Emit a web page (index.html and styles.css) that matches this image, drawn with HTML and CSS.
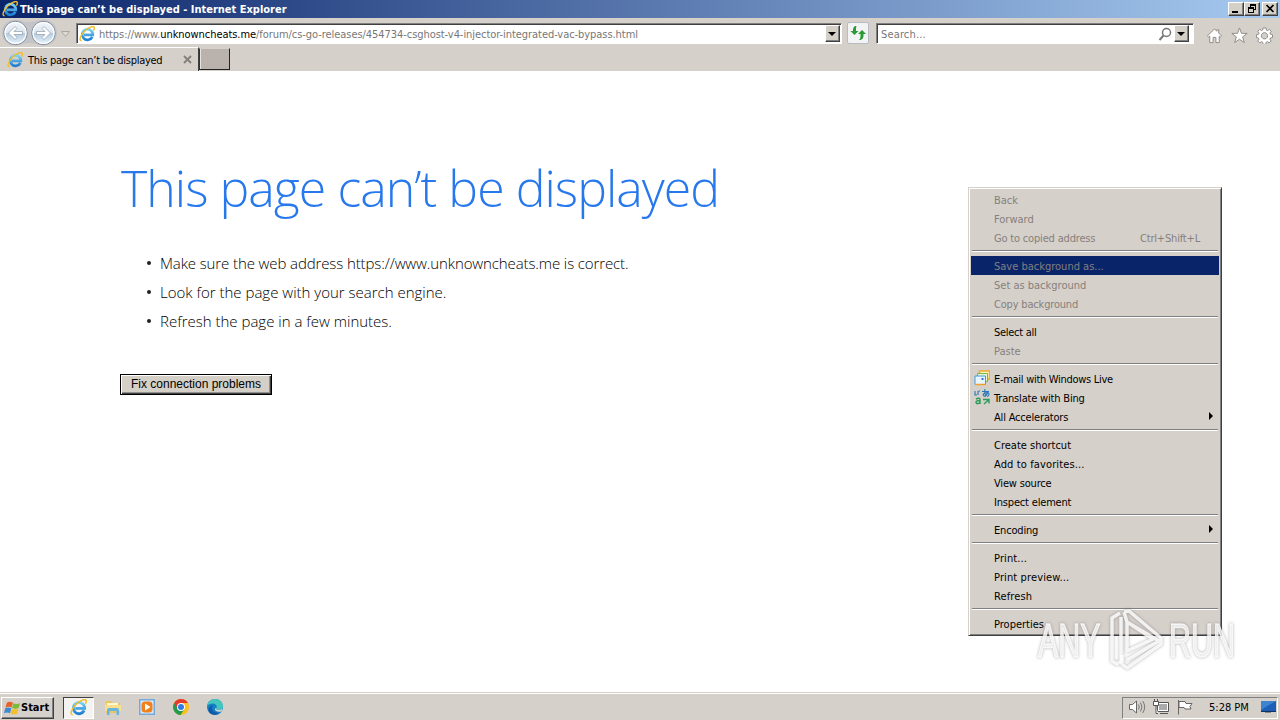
FILE: index.html
```html
<!DOCTYPE html>
<html lang="en">
<head>
<meta charset="utf-8">
<title>This page can’t be displayed - Internet Explorer</title>
<link rel="stylesheet" href="styles.css">
</head>
<body>
<svg class="defs" aria-hidden="true">
  <linearGradient id="blue" x1="0" y1="0" x2="0" y2="1"><stop offset="0" stop-color="#7cd3f7"/><stop offset="1" stop-color="#1d7fd0"/></linearGradient>
  <linearGradient id="orb" x1="0" y1="0" x2="0" y2="1"><stop offset="0" stop-color="#f4f7fb"/><stop offset=".48" stop-color="#dce5ef"/><stop offset=".52" stop-color="#b9cbdd"/><stop offset="1" stop-color="#e6f6ff"/></linearGradient>
  <symbol id="ie" viewBox="0 0 16 16">
    <path d="M13.3 10.8A5.3 5.3 0 1 1 13.8 8.8H5" fill="none" stroke="url(#blue)" stroke-width="2.7"/>
    <path d="M2.6 14.8C-.6 14.6 1.6 9 5.5 5.2 9.300 1.500 14.400-.7 15.200 1.300c.3.800 0 2-.7 3.300" fill="none" stroke="#f3bd25" stroke-width="1.400"/>
  </symbol>
</svg>
<div class="desktop">
  <header class="titlebar">
    <svg class="title-icon"><use href="#ie"/></svg>
    <span class="title-text">This page can’t be displayed - Internet Explorer</span>
    <div class="win-buttons">
      <span class="wb"><svg viewBox="0 0 14 12"><path d="M3 8h6v2H3z"/></svg></span>
      <span class="wb"><svg viewBox="0 0 14 12"><path d="M5 1h6v6H9V6h1V3H6v1H5zM3 4h6v6H3zM4 6v3h4V6z" fill-rule="evenodd"/></svg></span>
      <span class="wb last"><svg viewBox="0 0 14 12"><path d="M3.500 2l7 7M10.500 2l-7 7" stroke="#000" stroke-width="1.700"/></svg></span>
    </div>
  </header>

  <nav class="toolbar">
    <svg class="nav-orbs" viewBox="0 0 76 29">
      <path d="M2 15C2 0 18 1 22 3q7 2 14 0C46-1 57 3 57 15S44 29 36 26q-7-2-14 0C12 30 2 26 2 15z" fill="#c3c4c8"/>
      <g fill="url(#orb)" stroke="#7f8b9b"><circle cx="15.500" cy="15" r="11.700"/><circle cx="43.500" cy="15" r="11.700"/></g>
      <g fill="none" stroke="#fff" stroke-width="1.200"><circle cx="15.500" cy="15" r="10.500"/><circle cx="43.500" cy="15" r="10.500"/></g>
      <path d="M8.500 15l6.500-6.500 2 2-3 3h8.500v3H14l3 3-2 2zM50.500 15L44 8.500l-2 2 3 3h-8.500v3H45l-3 3 2 2z" fill="#fff" stroke="#8c9cac" stroke-width=".7"/>
      <path d="M61.500 13.500h8l-4 5z" fill="#dedbd7" stroke="#aaa6a0"/>
    </svg>
    <div class="field address">
      <svg class="field-icon"><use href="#ie"/></svg>
      <span class="url">https://www.<b>unknowncheats.me</b>/forum/cs-go-releases/454734-csghost-v4-injector-integrated-vac-bypass.html</span>
      <span class="drop"><svg viewBox="0 0 13 15"><path d="M2 6h8L6 10z"/></svg></span>
    </div>
    <div class="reload"><svg viewBox="0 0 20 20"><path d="M8.500 3H7Q5 4 5 6.500V8H2.500L6.500 12l4-4H8V5.500Q8 4 8.500 3z" fill="#2a9a35"/><path d="M11 17h1.500q3-1 3-4.500V11H18l-4-4-4 4h2.500v2.500q0 2-1.500 3.500z" fill="#2a9a35"/></svg></div>
    <div class="field search">
      <span class="hint">Search...</span>
      <svg class="lens" viewBox="0 0 14 14"><circle cx="8.500" cy="5.500" r="4" fill="none" stroke="#777" stroke-width="1.500"/><path d="M5.500 8.500L1.500 13" stroke="#777" stroke-width="2"/></svg>
      <span class="drop"><svg viewBox="0 0 13 15"><path d="M2 6h8L6 10z"/></svg></span>
    </div>
    <div class="tools">
      <svg viewBox="0 0 18 18"><path d="M1.500 9.500L9 2l2.500 2.500V3h2v3.500l3 3-1.200 1.200-1.300-1v6.800h-3.500V11h-3v5.500H4V9.700l-1.300 1z" /></svg>
      <svg viewBox="0 0 18 18"><path d="M9 1l2.100 5.700 6 .1-4.800 3.700 1.800 6L9 13l-5.100 3.500 1.800-6L.9 6.800l6-.1z"/></svg>
      <svg viewBox="0 0 18 18"><path d="M7.500 1h3l.4 2.200 1.300.6 1.900-1.300 2 2-1.300 1.900.6 1.300 2.100.5v3l-2.200.4-.6 1.300 1.300 1.900-2 2-1.900-1.300-1.300.6-.4 2.200h-3L7 16.100l-1.300-.6-1.900 1.300-2-2L3.100 13l-.6-1.300L.5 11.200v-3l2.100-.5.6-1.300-1.300-1.900 2-2 1.900 1.300L7 3.200zM9 6a3.300 3.300 0 1 0 .01 0z" fill-rule="evenodd"/></svg>
    </div>
  </nav>

  <div class="tabs">
    <div class="tab">
      <svg class="tab-icon"><use href="#ie"/></svg>
      <span class="tab-text">This page can’t be displayed</span>
      <svg class="tab-x" viewBox="0 0 9 9"><path d="M1 1l7 7M8 1L1 8" stroke="#86817b" stroke-width="1.900"/></svg>
    </div>
    <div class="newtab"></div>
  </div>

  <main class="page">
    <h1>This page can’t be displayed</h1>
    <ul>
      <li class="long">Make sure the web address https://www.unknowncheats.me is correct.</li>
      <li>Look for the page with your search engine.</li>
      <li>Refresh the page in a few minutes.</li>
    </ul>
    <button>Fix connection problems</button>
  </main>

  <footer class="taskbar">
    <div class="start">
      <svg viewBox="0 0 18 16"><path d="M3 2.500q3-2 6.500 0L8 7.500Q5 6 1.500 7.500z" fill="#e8632c"/><path d="M10 3q3 1.500 7 0L15.500 8q-3 1.500-7 0z" fill="#7db93b"/><path d="M1.300 8.200q3-1.600 6.500 0L6.300 13.500Q3.500 12 0 13.500z" fill="#3d8ad4"/><path d="M8.300 8.700q3 1.500 7 0L13.800 14q-3 1.500-7 0z" fill="#f5bf2c"/></svg>
      <span>Start</span>
    </div>
    <div class="task"><svg viewBox="0 0 16 16"><use href="#ie"/></svg></div>
    <div class="pins">
      <svg viewBox="0 0 18 18"><path d="M2 3h6l1 2h7v10H2z" fill="#e9c662"/><path d="M3 5h11v3H3z" fill="#fff7cf"/><path d="M1 7h16v6H1z" fill="#f7df8d"/><path d="M3 17v-5q0-2 2-2h8q2 0 2 2v5h-2.500v-4h-7v4z" fill="#68b5df"/></svg>
      <svg viewBox="0 0 18 18"><path d="M1 1h16v16H1z" fill="#74a9dc"/><path d="M2.500 2.500h13v13h-13z" fill="#d9eafa"/><rect x="3.500" y="3.500" width="11" height="11" rx="3.500" fill="#f0801a"/><path d="M7 5.500L12.500 9 7 12.500z" fill="#fff"/></svg>
      <svg viewBox="0 0 18 18"><circle cx="9" cy="9" r="8" fill="#fbc116"/><path d="M9 9L2.100 5A8 8 0 0 0 8.500 17l4-6z" fill="#249a4c"/><path d="M2.100 5A8 8 0 0 1 16 5H9v4H4.500z" fill="#e33b2e"/><circle cx="9" cy="9" r="4" fill="#fff"/><circle cx="9" cy="9" r="3" fill="#3478e5"/></svg>
      <svg viewBox="0 0 18 18"><circle cx="9" cy="9" r="8" fill="#147fc7"/><path d="M1.200 8C2 3 5.500 1 9 1c5 0 8 3.500 8 7 0 2.700-2 4-4.500 4-2 0-3-.8-2-2C11.500 8 9.500 5.500 7 5.500 4 5.500 2 6.500 1.200 8z" fill="#45c6bd"/><path d="M7 7.500c-3 3 .5 8 6 7.500-3 3-8 2-10-1-1.500-3 .5-6 4-6.500z" fill="#1459a5"/><path d="M10.500 10c-1 1.200 0 2 2 2q2.500 0 4-1.500l-1 3c-4 1-7-.5-6.500-3z" fill="#d6d3ce"/></svg>
    </div>
    <div class="tray">
      <svg viewBox="0 0 18 16"><path d="M1.500 5.500h3L8.500 2v12l-4-3.500h-3z" fill="#fff" stroke="#666"/><path d="M10.500 5.500q1.500 2.500 0 5M12.500 3.500q3 4.500 0 9M14.700 2q4 6 0 12" fill="none" stroke="#777"/></svg>
      <svg viewBox="0 0 18 16"><path d="M5.500 3.500h11v9h-11z" fill="#fff" stroke="#555"/><path d="M7 5h8v6H7z" fill="#aaa"/><path d="M1.500 2.500h5v4h-5zM2.500 0v2M5.500 0v2M4 6.500v8h2M8 14.500h8" fill="#fff" stroke="#555"/></svg>
      <svg viewBox="0 0 18 16"><path d="M2.500 1v14.500M3 2.500h6l1 2h6l-2 3 1 2.500H9L8 8.500H3z" fill="#fff" stroke="#666"/></svg>
      <span class="clock">5:28 PM</span>
      <svg class="show" viewBox="0 0 16 16"><path d="M1 1h15v11H1z" fill="#1d5fb8"/><path d="M1 1h15L4 8 1 10z" fill="#3d83d0"/><path d="M1 11h15v1H1z" fill="#10345f"/><path d="M5 12h6v1H5z" fill="#888"/></svg>
    </div>
  </footer>

  <div class="menu">
    <div class="item off"><span>Back</span></div>
    <div class="item off"><span>Forward</span></div>
    <div class="item off snug"><span>Go to copied address</span><span class="key">Ctrl+Shift+L</span></div>
    <hr>
    <div class="item off hot"><span>Save background as...</span></div>
    <div class="item off"><span>Set as background</span></div>
    <div class="item off snug"><span>Copy background</span></div>
    <hr>
    <div class="item tight"><span>Select all</span></div>
    <div class="item off"><span>Paste</span></div>
    <hr>
    <div class="item tight"><svg class="mi" viewBox="0 0 16 16"><path d="M5.500 1h10v8h-10z" fill="#fff3c0" stroke="#efac2e" stroke-width="1.500"/><path d="M3.500 3.500h10v8h-10z" fill="#e8f6d5" stroke="#74b944"/><path d="M1 6h10.500v8.500H1z" fill="#e8f5ff" stroke="#469bd7"/><path d="M1 14.500h10.500" stroke="#f0a32c" stroke-width="1.500"/><path d="M7.500 8h2v2h-2z" fill="#3170c8"/></svg><span>E-mail with Windows Live</span></div>
    <div class="item snug"><svg class="mi" viewBox="0 0 16 16"><g fill="none"><path d="M1 2v4h2M4 2v4M6 2H4.500M8 2.500h7M11 0q-1 4 1 7M14 3q-2 5-4 4-2-2 1-3 4-1 4 1 0 2-2 2.500" stroke="#2677b8" stroke-width="1.100"/><path d="M2 10q4-2 4 1v4M6 12q-4-1-4 1.500 1 2.500 4 0M9 10.500h6v4M15 10.500L10 15" stroke="#2b9b57" stroke-width="1.400"/></g></svg><span>Translate with Bing</span></div>
    <div class="item sub snug"><span>All Accelerators</span></div>
    <hr>
    <div class="item"><span>Create shortcut</span></div>
    <div class="item loose"><span>Add to favorites...</span></div>
    <div class="item snug"><span>View source</span></div>
    <div class="item snug"><span>Inspect element</span></div>
    <hr>
    <div class="item sub snug"><span>Encoding</span></div>
    <hr>
    <div class="item loose"><span>Print...</span></div>
    <div class="item loose"><span>Print preview...</span></div>
    <div class="item loose"><span>Refresh</span></div>
    <hr>
    <div class="item"><span>Properties</span></div>
  </div>

  <div class="mark">
    <span class="any">ANY</span>
    <svg viewBox="0 0 58 64"><g fill="none" stroke="#fff" stroke-opacity=".85" stroke-width="3.500" stroke-linejoin="round"><path d="M13 5L5 10v43l5 3 4-3V9"/><path d="M17 4l5-1 32 27v6L20 60l-5-4V47M20 14v29L46 31zM17 4l3 10 32 19L20 52"/></g></svg>
    <span class="run">RUN</span>
  </div>
</div>
</body>
</html>
```

FILE: styles.css
```css
* { box-sizing: border-box; }
body { margin: 0; background: #fff; }
svg { display: block; flex: none; }
.defs { position: absolute; width: 0; height: 0; }
.desktop {
  position: relative; display: flex; flex-direction: column;
  width: 1280px; height: 720px; overflow: hidden;
  font-family: "DejaVu Sans Condensed", "DejaVu Sans", sans-serif;
  font-stretch: condensed; font-size: 11px; color: #000; white-space: nowrap;
}
.titlebar {
  display: flex; align-items: center; height: 18px; padding: 0 2px 0 2px;
  background: linear-gradient(90deg, #0a246a, #a6caf0);
}
.title-icon { width: 16px; height: 16px; }
.title-text { flex: 1; margin-left: 2px; color: #fff; font-weight: bold; }
.win-buttons { display: flex; }
.wb {
  width: 16px; height: 14px; background: #d4d0c8; border: 1px solid;
  border-color: #fff #404040 #404040 #fff; box-shadow: inset -1px -1px #808080;
}
.wb svg { width: 14px; height: 12px; }
.wb.last { margin-left: 2px; }

.toolbar { display: flex; align-items: flex-start; height: 29px; background: #d6d0cb; }
.nav-orbs { width: 76px; height: 29px; }
.field {
  display: flex; align-items: center; height: 21px; margin-top: 5px; background: #fff;
  border: 1px solid; border-color: #808080 #fff #fff #808080; box-shadow: inset 1px 1px #404040;
}
.address { width: 766px; padding: 0 1px 0 2px; }
.field-icon { width: 16px; height: 16px; }
.url { flex: 1; margin-left: 4px; padding-top: 1px; color: #777; letter-spacing: -.057px; }
.url b { font-weight: normal; color: #000; }
.drop {
  width: 15px; height: 17px; background: #d4d0c8; border: 1px solid;
  border-color: #fff #404040 #404040 #fff; box-shadow: inset -1px -1px #808080;
}
.drop svg { width: 13px; height: 15px; }
.reload {
  width: 22px; height: 22px; margin: 4px 0 0 5px; background: #f1f3f4;
  border: 1px solid #b8bcc2; border-radius: 2px;
}
.search { width: 318px; margin-left: 7px; padding: 0 4px 0 4px; }
.hint { flex: 1; padding-top: 1px; color: #777; letter-spacing: .15px; }
.lens { width: 14px; height: 14px; margin-right: 2px; }
.tools { display: flex; gap: 8px; margin: 9px 0 0 12px; }
.tools svg { width: 17px; height: 17px; fill: #fff; stroke: #8c8884; stroke-width: 1; }

.tabs { display: flex; height: 24px; background: #d6d0cb; }
.tab {
  display: flex; align-items: center; width: 199px; padding: 0 6px 0 7px;
  background: #d6d0cb; border-top: 1px solid #fff; border-right: 1px solid #404040;
}
.tab-icon { width: 16px; height: 16px; }
.tab-text { flex: 1; margin-left: 5px; padding-top: 1px; letter-spacing: -.28px; }
.tab-x { width: 9px; height: 9px; }
.newtab {
  width: 31px; height: 22px; margin-top: 1px; background: #b9b2ad; border: 1px solid;
  border-color: #d6d0cb #222 #222 #333; box-shadow: inset 1px 0 #e8e4e0;
}

.page { flex: 1; padding: 82px 0 0 120px; background: #fff; font-family: "Open Sans", "Noto Sans", sans-serif; font-stretch: normal; font-weight: 300; }
h1 { margin: 0 0 0 1px; height: 70px; line-height: 70px; font-size: 50px; font-weight: 300; color: #2778ec; letter-spacing: -.96px; }
ul { margin: 25px 0 0; padding: 0; list-style: none; }
li { display: flex; align-items: center; height: 29px; font-size: 15px; }
li.long { letter-spacing: -.11px; }
li::before { content: ""; width: 4px; height: 4px; margin: 1px 9px 0 27px; border-radius: 50%; background: #222; }
button {
  display: block; width: 152px; height: 21px; margin: 39px 0 0; padding: 0; background: #d4d0c8;
  border: 1px solid #000; box-shadow: inset 1px 1px #fff, inset -1px -1px #404040, inset -2px -2px #909090;
  font: 12px/17px "Liberation Sans", Arial, sans-serif; color: #000;
}

.taskbar { display: flex; align-items: center; height: 28px; padding: 2px 2px 0 1px; background: #d6d0cb; border-top: 1px solid #d6d0cb; box-shadow: inset 0 1px #fff; }
.start {
  display: flex; align-items: center; width: 53px; height: 22px; padding-left: 2px;
  border: 1px solid; border-color: #fff #404040 #404040 #fff; box-shadow: inset -1px -1px #808080;
  font-weight: bold;
}
.start svg { width: 17px; height: 16px; }
.task {
  display: flex; align-items: center; justify-content: center; width: 31px; height: 22px; margin-left: 9px; background: #f5f3f1;
  border: 1px solid; border-color: #404040 #fff #fff #404040;
}
.task svg { width: 17px; height: 17px; }
.pins { display: flex; gap: 16px; flex: 1; margin: -1px 0 0 10px; }
.pins svg { width: 18px; height: 18px; }
.tray {
  display: flex; align-items: center; width: 156px; height: 22px; padding-left: 5px;
  border: 1px solid; border-color: #808080 #fff #fff #808080;
}
.tray svg { width: 18px; height: 16px; margin: -1px 6px 0 0; }
.clock { width: 40px; margin: 0 11px 0 9px; }
.tray svg.show { width: 16px; margin: 0; }

.menu {
  position: absolute; left: 968px; top: 187px; width: 254px; height: 449px; padding: 2px;
  background: #d6d0cb; border: 1px solid; border-color: #d6d0cb #404040 #404040 #d6d0cb;
  box-shadow: inset 1px 1px #fff, inset -1px -1px #808080;
}
.item { position: relative; display: flex; align-items: center; height: 19px; padding: 2px 19px 0 23px; }
.item.off { color: #85807b; }
.item.hot { background: #0a246a; color: #808080; }
.item.snug { letter-spacing: -.18px; }
.item.tight { letter-spacing: -.29px; }
.item.loose { letter-spacing: .12px; }
.key { margin-left: auto; }
.mi { position: absolute; left: 3px; top: 1px; width: 16px; height: 16px; }
.item.sub::after { content: ""; margin: 0 -13px 3px auto; border: 4px solid transparent; border-left-color: #000; border-right-width: 0; }
.menu hr { height: 2px; margin: 3px 1px 4px; border: 0; border-top: 1px solid #808080; border-bottom: 1px solid #fff; }

.mark {
  position: absolute; left: 1038px; top: 608px; display: flex; align-items: center; height: 64px;
  font: 49px/66px "Liberation Sans", Arial, sans-serif; color: rgba(255,255,255,.75);
  -webkit-text-stroke: 1.5px rgba(255,255,255,.75);
  filter: drop-shadow(0 0 1.5px rgba(70,70,70,.5));
}
.mark svg { width: 58px; height: 64px; }
.mark span { display: block; width: 69px; transform: scaleX(.62); transform-origin: left; }
.mark .run { width: 66px; margin-left: 4px; }
```
